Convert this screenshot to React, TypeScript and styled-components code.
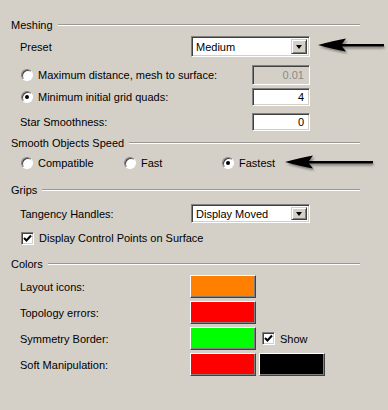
import React from "react";
import styled, { createGlobalStyle } from "styled-components";

const Global = createGlobalStyle`
  html, body {
    margin: 0;
    padding: 0;
    background: #d4d0c8;
  }
  body {
    font-family: "Liberation Sans", Arial, sans-serif;
    font-size: 11px;
    color: #000;
  }
`;

const Page = styled.div`
  width: 388px;
  height: 410px;
  background: #d4d0c8;
  padding-left: 11px;
  box-sizing: border-box;
  overflow: hidden;
  display: flex;
  flex-direction: column;
`;

const Header = styled.div<{ $top: number }>`
  display: flex;
  align-items: center;
  width: 349px;
  height: 14px;
  margin-top: ${({ $top }) => $top}px;
`;

const HeaderLine = styled.div`
  flex: 1;
  height: 0;
  margin-left: 5px;
  border-top: 1px solid #9a9893;
  border-bottom: 1px solid #ffffff;
`;

// content box runs from x=20 to x=310
const Row = styled.div<{ $top: number; $h: number }>`
  display: flex;
  align-items: center;
  width: 290px;
  height: ${({ $h }) => $h}px;
  margin-top: ${({ $top }) => $top}px;
  padding-left: 9px;
`;

const RadioRow = styled(Row)`
  padding-left: 18px;
  width: 281px;
`;

const CheckRow = styled(Row)`
  padding-left: 10px;
  width: 289px;
`;

const SwatchRow = styled(Row)`
  gap: 3px;
`;

const Label = styled.span<{ $w?: number }>`
  width: ${({ $w }) => $w ?? 171}px;
  flex-shrink: 0;
  white-space: nowrap;
`;

const sunken = `
  box-sizing: border-box;
  border-top: 1px solid #808080;
  border-left: 1px solid #808080;
  border-bottom: 1px solid #ffffff;
  border-right: 1px solid #ffffff;
  box-shadow: inset 1px 1px 0 #404040, inset -1px -1px 0 #d4d0c8;
`;

const Combo = styled.div<{ $h: number }>`
  ${sunken}
  width: 119px;
  height: ${({ $h }) => $h}px;
  background: #fff;
  display: flex;
  align-items: center;
  padding: 2px;
  flex-shrink: 0;
`;

const ComboText = styled.span`
  flex: 1;
  padding-left: 2px;
`;

const ComboButton = styled.div`
  box-sizing: border-box;
  width: 16px;
  height: 100%;
  background: #d4d0c8;
  border-top: 1px solid #d4d0c8;
  border-left: 1px solid #d4d0c8;
  border-bottom: 1px solid #404040;
  border-right: 1px solid #404040;
  box-shadow: inset 1px 1px 0 #fff, inset -1px -1px 0 #808080;
  display: flex;
  align-items: center;
  justify-content: center;
  &::after {
    content: "";
    border-left: 3.5px solid transparent;
    border-right: 3.5px solid transparent;
    border-top: 4px solid #000;
    margin-top: 1px;
  }
`;

const Field = styled.div<{ $disabled?: boolean }>`
  ${sunken}
  width: 58px;
  height: ${({ $disabled }) => ($disabled ? 20 : 18)}px;
  margin-left: auto;
  background: ${({ $disabled }) => ($disabled ? "#d4d0c8" : "#fff")};
  color: ${({ $disabled }) => ($disabled ? "#8a8a8a" : "#000")};
  display: flex;
  align-items: center;
  justify-content: flex-end;
  padding-right: 5px;
  flex-shrink: 0;
`;

const RadioItem = styled.div<{ $w?: number }>`
  display: flex;
  align-items: center;
  width: ${({ $w }) => ($w ? `${$w}px` : "auto")};
  flex-shrink: 0;
  white-space: nowrap;
`;

const Radio = styled.span<{ $on?: boolean }>`
  box-sizing: border-box;
  width: 12px;
  height: 12px;
  border-radius: 50%;
  background: #fff;
  border: 1px solid;
  border-color: #808080 #ffffff #ffffff #808080;
  box-shadow: inset 1px 1px 0 #404040;
  margin-left: -8px;
  margin-right: 5px;
  position: relative;
  flex-shrink: 0;
  &::after {
    content: "";
    display: ${({ $on }) => ($on ? "block" : "none")};
    position: absolute;
    left: 3px;
    top: 3px;
    width: 4px;
    height: 4px;
    border-radius: 50%;
    background: #000;
  }
`;

const Check = styled.span`
  ${sunken}
  width: 13px;
  height: 13px;
  background: #fff;
  display: inline-flex;
  align-items: center;
  justify-content: center;
  margin-right: 5px;
  flex-shrink: 0;
`;

const Swatch = styled.div<{ $color: string }>`
  box-sizing: border-box;
  width: 66px;
  height: 23px;
  background: ${({ $color }) => $color};
  border-top: 1px solid #ffffff;
  border-left: 1px solid #ffffff;
  border-bottom: 1px solid #404040;
  border-right: 1px solid #404040;
  box-shadow: inset -1px -1px 0 #808080;
  flex-shrink: 0;
`;

const ShowBox = styled.div`
  display: flex;
  align-items: center;
  padding-left: 3px;
  flex-shrink: 0;
`;

const ArrowWrap = styled.div<{ $gap: number }>`
  margin-left: ${({ $gap }) => $gap}px;
  flex-shrink: 0;
  display: flex;
  align-items: center;
`;

const Tick = () => (
  <svg width="9" height="9" viewBox="0 0 9 9">
    <path d="M1 4 L3.5 6.5 L8 1.5" fill="none" stroke="#000" strokeWidth="2" />
  </svg>
);

const arrowPath = (len: number) =>
  `M0 7 C 10 4, 20 2, 28 0.5 L 24 6 L ${len} 6 L ${len} 8.5 L 24 8.5 L 28 13.5 C 20 12, 10 10, 0 7 Z`;

const Arrow = ({ len, gap }: { len: number; gap: number }) => (
  <ArrowWrap $gap={gap}>
    <svg width={len + 2} height="17" viewBox={`0 0 ${len + 2} 17`}>
      <defs>
        <filter id={`blur${len}`} x="-10%" y="-50%" width="120%" height="200%">
          <feGaussianBlur stdDeviation="1.2" />
        </filter>
      </defs>
      <g filter={`url(#blur${len})`} opacity="0.4" transform="translate(1.5,2)">
        <path d={arrowPath(len - 3)} fill="#000" />
      </g>
      <path d={arrowPath(len - 2)} fill="#000" />
    </svg>
  </ArrowWrap>
);

export default function App() {
  return (
    <>
      <Global />
      <Page>
        <Header $top={18}>
          Meshing
          <HeaderLine />
        </Header>
        <Row $top={4} $h={21}>
          <Label>Preset</Label>
          <Combo $h={21}>
            <ComboText>Medium</ComboText>
            <ComboButton />
          </Combo>
          <Arrow len={68} gap={8} />
        </Row>
        <RadioRow $top={8} $h={20}>
          <RadioItem>
            <Radio />
            Maximum distance, mesh to surface:
          </RadioItem>
          <Field $disabled>0.01</Field>
        </RadioRow>
        <RadioRow $top={3} $h={18}>
          <RadioItem>
            <Radio $on />
            Minimum initial grid quads:
          </RadioItem>
          <Field>4</Field>
        </RadioRow>
        <Row $top={7} $h={18}>
          <Label>Star Smoothness:</Label>
          <Field>0</Field>
        </Row>

        <Header $top={5}>
          Smooth Objects Speed
          <HeaderLine />
        </Header>
        <RadioRow $top={5} $h={16}>
          <RadioItem $w={103}>
            <Radio />
            Compatible
          </RadioItem>
          <RadioItem $w={98}>
            <Radio />
            Fast
          </RadioItem>
          <RadioItem>
            <Radio $on />
            Fastest
          </RadioItem>
          <Arrow len={90} gap={10} />
        </RadioRow>

        <Header $top={12}>
          Grips
          <HeaderLine />
        </Header>
        <Row $top={7} $h={19}>
          <Label>Tangency Handles:</Label>
          <Combo $h={19}>
            <ComboText>Display Moved</ComboText>
            <ComboButton />
          </Combo>
        </Row>
        <CheckRow $top={8} $h={14}>
          <Check>
            <Tick />
          </Check>
          Display Control Points on Surface
        </CheckRow>

        <Header $top={12}>
          Colors
          <HeaderLine />
        </Header>
        <SwatchRow $top={4} $h={23}>
          <Label $w={167}>Layout icons:</Label>
          <Swatch $color="#ff8000" />
        </SwatchRow>
        <SwatchRow $top={3} $h={23}>
          <Label $w={167}>Topology errors:</Label>
          <Swatch $color="#ff0000" />
        </SwatchRow>
        <SwatchRow $top={3} $h={23}>
          <Label $w={167}>Symmetry Border:</Label>
          <Swatch $color="#00ff00" />
          <ShowBox>
            <Check>
              <Tick />
            </Check>
            Show
          </ShowBox>
        </SwatchRow>
        <SwatchRow $top={3} $h={23}>
          <Label $w={167}>Soft Manipulation:</Label>
          <Swatch $color="#ff0000" />
          <Swatch $color="#000000" />
        </SwatchRow>
      </Page>
    </>
  );
}
